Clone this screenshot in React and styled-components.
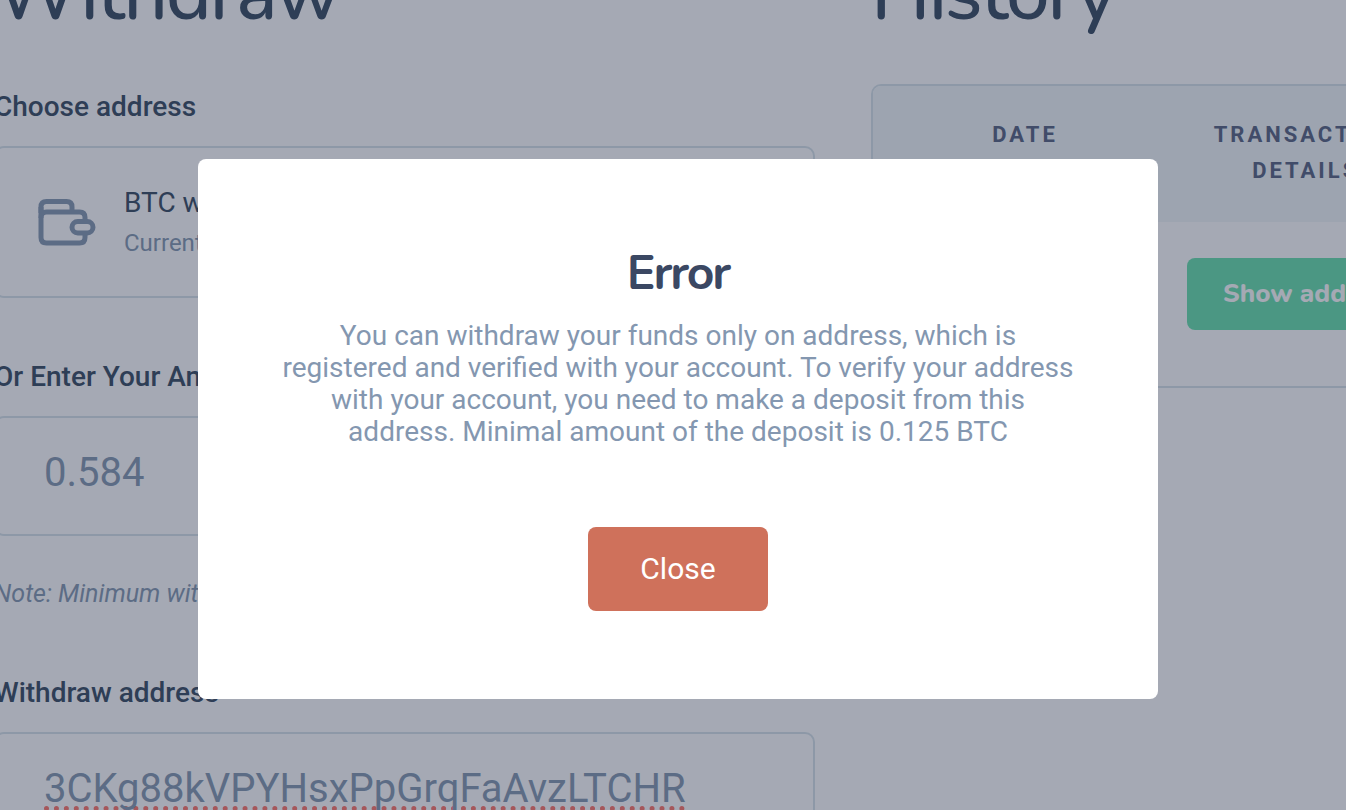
import React from 'react'
import styled, { createGlobalStyle } from 'styled-components'

export default function App() {
  return (
    <>
      <GlobalStyle />
      <Viewport>
        <Page>
          <section>
            <PageTitle>Withdraw</PageTitle>
            <Form>
              <Field>
                <Label id="choose-address">Choose address</Label>
                <WalletOption type="button" aria-labelledby="choose-address">
                  <WalletIcon />
                  <WalletInfo>
                    <WalletName>BTC wallet</WalletName>
                    <WalletBalance>Current balance</WalletBalance>
                  </WalletInfo>
                </WalletOption>
              </Field>
              <Field>
                <Label as="label" htmlFor="amount">
                  Or Enter Your Amount
                </Label>
                <Input id="amount" defaultValue="0.584" />
                <Note>Note: Minimum withdraw</Note>
              </Field>
              <Field>
                <Label as="label" htmlFor="address">
                  Withdraw address
                </Label>
                <Input
                  id="address"
                  defaultValue="3CKg88kVPYHsxPpGrqFaAvzLTCHR"
                  spellCheck={false}
                  $misspelled
                />
              </Field>
            </Form>
          </section>
          <section>
            <PageTitle>History</PageTitle>
            <TableFrame>
              <Table>
                <thead>
                  <tr>
                    <HeadCell $width="304px">Date</HeadCell>
                    <HeadCell $width="auto">Transaction details</HeadCell>
                  </tr>
                </thead>
                <tbody>
                  <tr>
                    <Cell />
                    <Cell>
                      <ShowButton type="button">Show address</ShowButton>
                    </Cell>
                  </tr>
                </tbody>
              </Table>
            </TableFrame>
          </section>
        </Page>
      </Viewport>
      <Overlay>
        <Modal role="alertdialog" aria-modal="true" aria-labelledby="modal-title">
          <ModalTitle id="modal-title">Error</ModalTitle>
          <ModalText>
            You can withdraw your funds only on address, which is registered and
            verified with your account. To verify your address with your
            account, you need to make a deposit from this address. Minimal
            amount of the deposit is 0.125 BTC
          </ModalText>
          <CloseButton type="button">Close</CloseButton>
        </Modal>
      </Overlay>
    </>
  )
}

function WalletIcon() {
  return (
    <svg
      width="58"
      height="48"
      viewBox="0 0 58 48"
      fill="none"
      stroke="#8497b0"
      strokeWidth="5"
      aria-hidden="true"
    >
      <path d="M3 14V8Q3 2.500 8.500 2.500H28.500Q34 2.500 34 8V13" />
      <path d="M47 21.500V18.500Q47 13 41.500 13H8.500Q3 13 3 18.500V38.500Q3 44 8.500 44H41.500Q47 44 47 38.500V34" />
      <path d="M3 19V8" />
      <rect x="34" y="22.500" width="21" height="11.500" rx="5.750" />
    </svg>
  )
}

const GlobalStyle = createGlobalStyle`
  *,
  *::before,
  *::after {
    box-sizing: border-box;
  }
  body {
    margin: 0;
    background: #ffffff;
    font-family: Roboto, 'Liberation Sans', sans-serif;
    color: #364960;
  }
  h1, h2, p {
    margin: 0;
  }
  button, input {
    font-family: inherit;
  }
`

const Viewport = styled.div`
  height: 100vh;
  overflow: hidden;
`

// the page sits slightly scrolled under the dialog
const Page = styled.main`
  display: grid;
  grid-template-columns: 61vw 42vw;
  column-gap: 56px;
  margin: -54px 0 0 -6px;
`

const PageTitle = styled.h1`
  font-family: Nunito, Lato, sans-serif;
  font-weight: 500;
  font-size: 78px;
  line-height: 96px;
  letter-spacing: -2px;
  margin: 0 0 42px 0;
`

const Form = styled.form`
  display: flex;
  flex-direction: column;
  gap: 60px;
  padding: 4px 0 0 0;
`

const Field = styled.div`
  display: flex;
  flex-direction: column;
`

const Label = styled.span`
  font-weight: 500;
  font-size: 28px;
  line-height: 38px;
  margin: 0 0 20px 0;
`

const WalletOption = styled.button`
  display: flex;
  align-items: center;
  gap: 28px;
  height: 152px;
  padding: 2px 42px 0;
  background: none;
  border: 2px solid #d7e3e9;
  border-radius: 10px;
  color: inherit;
  text-align: left;
`

const WalletInfo = styled.span`
  display: flex;
  flex-direction: column;
  gap: 4px;
`

const WalletName = styled.span`
  font-size: 28px;
  line-height: 36px;
`

const WalletBalance = styled.span`
  font-size: 24px;
  line-height: 36px;
  color: #8497b0;
`

const Input = styled.input`
  width: 100%;
  height: 120px;
  padding: 0 48px 8px;
  background: none;
  border: 2px solid #d7e3e9;
  border-radius: 10px;
  color: #8497b0;
  font-size: 40px;
  text-decoration: ${props =>
    props.$misspelled ? 'underline dotted #ff7468 5px' : 'none'};
  text-decoration-skip-ink: none;
  text-underline-offset: 4px;
`

const Note = styled.p`
  font-style: italic;
  font-size: 25px;
  line-height: 36px;
  color: #8497b0;
  margin: 40px 0 2px 0;
`

const TableFrame = styled.div`
  border: 2px solid #d7e3e9;
  border-radius: 10px;
  overflow: hidden;
`

const Table = styled.table`
  width: 100%;
  table-layout: fixed;
  border-collapse: collapse;
`

const HeadCell = styled.th`
  width: ${props => props.$width};
  padding: 31px 20px 33px;
  background: #f2f7f8;
  color: #556280;
  font-weight: 700;
  font-size: 22px;
  line-height: 36px;
  letter-spacing: 3px;
  text-transform: uppercase;
  vertical-align: top;
`

const Cell = styled.td`
  padding: 36px 10px 56px;
  text-align: center;
`

const ShowButton = styled.button`
  display: block;
  width: 100%;
  height: 72px;
  padding: 0 36px 2px;
  background: #67e1ac;
  border: 0;
  border-radius: 8px;
  color: #ffffff;
  font-family: Nunito, Lato, sans-serif;
  font-weight: 800;
  font-size: 26px;
  white-space: nowrap;
`

const Overlay = styled.div`
  position: fixed;
  inset: 0;
  display: flex;
  align-items: center;
  justify-content: center;
  padding: 48px 0 0 10px;
  background: rgba(36, 47, 72, 0.41);
`

const Modal = styled.div`
  display: flex;
  flex-direction: column;
  align-items: center;
  width: 960px;
  max-width: 90vw;
  padding: 83px 80px 88px;
  background: #ffffff;
  border-radius: 8px;
  text-align: center;
`

const ModalTitle = styled.h2`
  font-family: Nunito, Lato, sans-serif;
  font-weight: 700;
  font-size: 48px;
  line-height: 62px;
  letter-spacing: -2px;
  color: #3b4863;
  margin: 0 0 16px 0;
`

const ModalText = styled.p`
  font-size: 28px;
  line-height: 32px;
  color: #8497b0;
  margin: 0 0 79px 0;
`

const CloseButton = styled.button`
  width: 180px;
  height: 84px;
  padding: 0 0 2px;
  background: #cf715b;
  border: 0;
  border-radius: 8px;
  color: #ffffff;
  font-size: 30px;
`
